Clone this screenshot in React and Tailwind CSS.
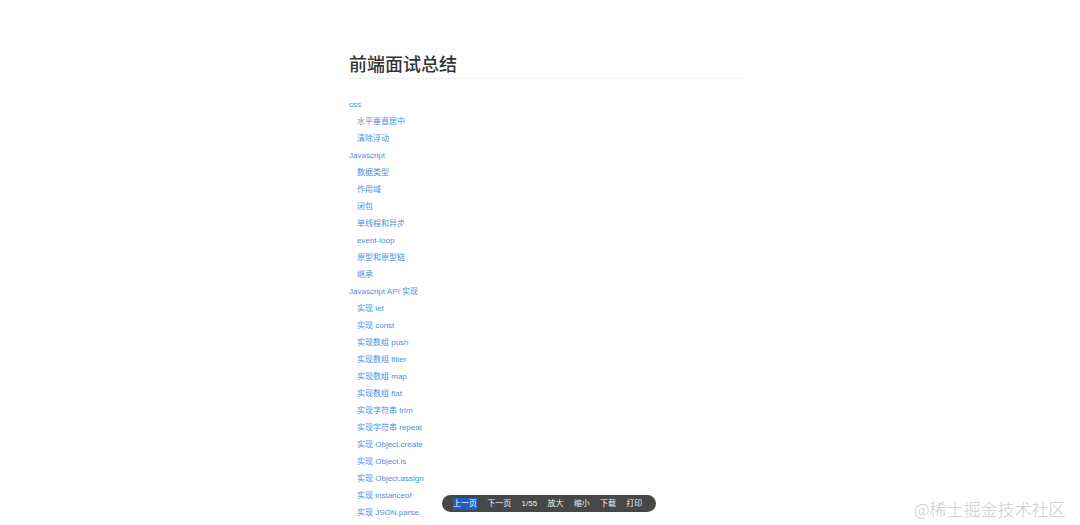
const items = [
  ['css', 0],
  ['水平垂直居中', 1],
  ['清除浮动', 1],
  ['Javascript', 0],
  ['数据类型', 1],
  ['作用域', 1],
  ['闭包', 1],
  ['单线程和异步', 1],
  ['event-loop', 1],
  ['原型和原型链', 1],
  ['继承', 1],
  ['Javascript API 实现', 0],
  ['实现 let', 1],
  ['实现 const', 1],
  ['实现数组 push', 1],
  ['实现数组 filter', 1],
  ['实现数组 map', 1],
  ['实现数组 flat', 1],
  ['实现字符串 trim', 1],
  ['实现字符串 repeat', 1],
  ['实现 Object.create', 1],
  ['实现 Object.is', 1],
  ['实现 Object.assign', 1],
  ['实现 instanceof', 1],
  ['实现 JSON.parse', 1],
]

const tools = ['下一页', '1/55', '放大', '缩小', '下载', '打印']

export default function App() {
  return (
    <div className="relative h-[525px] overflow-hidden bg-white font-['Liberation_Sans','Noto_Sans_CJK_SC',sans-serif]">
      {/* Document */}
      <main className="ml-[349px] w-[392px] pt-[53px]">
        <h1 className="border-b border-[#eeeeee] pb-[1px] text-[18px] leading-[24px] font-medium text-[#333333]">前端面试总结</h1>
        <ul className="mt-[17px]">
          {items.map(([label, level]) => (
            <li key={label} className={level ? 'pl-2 text-[8px] leading-[17px] text-[#4a8fe0]' : 'text-[8px] leading-[17px] text-[#4a8fe0]'}>
              {label}
            </li>
          ))}
        </ul>
      </main>

      {/* Toolbar */}
      <div className="absolute top-[495px] left-[442px] flex h-[17px] w-[214px] items-center gap-[10.3px] rounded-full bg-[#474747] pl-[11px] text-[8px] text-[#eeeeee]">
        <span className="bg-[#1d5fc4] text-white">上一页</span>
        {tools.map((t) => (
          <span key={t}>{t}</span>
        ))}
      </div>

      {/* Watermark */}
      <div className="absolute top-[498px] left-[914px] text-[17px] leading-[22px] font-light text-[#cccccc]">
        <span className="font-['Noto_Sans_CJK_SC',sans-serif]">@稀土掘金技术社区</span>
      </div>
    </div>
  )
}
